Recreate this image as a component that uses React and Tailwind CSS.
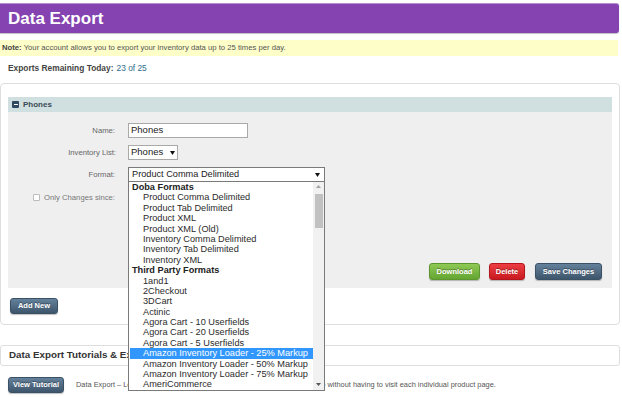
import React from 'react';

const doba = [
    'Product Comma Delimited',
    'Product Tab Delimited',
    'Product XML',
    'Product XML (Old)',
    'Inventory Comma Delimited',
    'Inventory Tab Delimited',
    'Inventory XML',
];

const thirdParty = [
    '1and1',
    '2Checkout',
    '3DCart',
    'Actinic',
    'Agora Cart - 10 Userfields',
    'Agora Cart - 20 Userfields',
    'Agora Cart - 5 Userfields',
    'Amazon Inventory Loader - 25% Markup',
    'Amazon Inventory Loader - 50% Markup',
    'Amazon Inventory Loader - 75% Markup',
    'AmeriCommerce',
];

const Caret = () => (
    <svg width="5" height="4" viewBox="0 0 5 4" className="shrink-0">
        <path d="M0 0 L5 0 L2.5 4 Z" fill="#111" />
    </svg>
);

const Btn = ({ children, className }) => (
    <div
        className={`flex items-center justify-center whitespace-nowrap rounded-[3px] text-[7.5px] font-bold text-white [text-shadow:0_-1px_0_rgba(0,0,0,0.35)] shadow-[0_1px_1px_rgba(0,0,0,0.25)] ${className}`}
    >
        {children}
    </div>
);

const FormatDropdown = () => (
    <div className="absolute left-0 top-full z-10 flex h-[209px] w-[197px] border border-t-0 border-[#7a7a7a] bg-white">
        <div className="flex flex-1 flex-col whitespace-nowrap pl-[1px] text-[9.2px] leading-[10.4px] text-[#2b2b2b]">
            <div className="h-[10.4px] pl-[2px] font-bold text-[#222]">Doba Formats</div>
            {doba.map((item) => (
                <div key={item} className="h-[10.4px] pl-[13px]">{item}</div>
            ))}
            <div className="h-[10.4px] pl-[2px] font-bold text-[#222]">Third Party Formats</div>
            {thirdParty.map((item) => (
                <div
                    key={item}
                    className={`h-[10.4px] pl-[13px] ${item.includes('25%') ? 'bg-[#3297fd] text-white' : ''}`}
                >
                    {item}
                </div>
            ))}
        </div>
        {/* scrollbar */}
        <div className="flex w-[11px] shrink-0 flex-col items-center bg-[#f1f1f1]">
            <svg width="5" height="3" viewBox="0 0 5 3" className="mt-[3px]">
                <path d="M0 3 L5 3 L2.5 0 Z" fill="#a3a3a3" />
            </svg>
            <div className="mt-[6px] h-[34px] w-[8px] bg-[#c1c1c1]"></div>
            <div className="flex-1"></div>
            <svg width="5" height="3" viewBox="0 0 5 3" className="mb-[4px]">
                <path d="M0 0 L5 0 L2.5 3 Z" fill="#555" />
            </svg>
        </div>
    </div>
);

const App = () => {
    return (
        <div className="relative h-[397px] w-[622px] overflow-hidden bg-white font-['Liberation_Sans',Arial,sans-serif] text-[#333]">
            {/* Title bar */}
            <div className="mr-[3px] mt-[3px] flex h-[30px] items-center rounded-r-[3px] border-t border-[#b58fd0] border-b-[#5f2f80] bg-[#8443b0] pl-[8px] shadow-[0_1px_1px_rgba(0,0,0,0.25)]">
                <h1 className="text-[17px] font-bold text-white">Data Export</h1>
            </div>

            {/* Note */}
            <div className="mr-[4px] mt-[7px] flex h-[16px] items-center whitespace-nowrap bg-[#fefec8] pl-[2px] text-[7.7px] text-[#555]">
                <span className="font-bold text-[#444]">Note:</span>
                <span className="ml-[2px]">Your account allows you to export your inventory data up to 25 times per day.</span>
            </div>

            {/* Remaining */}
            <div className="mt-[6px] flex h-[12px] items-center pl-[8px] text-[8.4px]">
                <span className="font-bold text-[#444]">Exports Remaining Today:</span>
                <span className="ml-[3px] text-[#2f6d8c]">23 of 25</span>
            </div>

            {/* Exports panel */}
            <div className="mr-[2px] mt-[9px] h-[242px] rounded-[4px] border border-[#dedede] px-[7px] pt-[13px]">
                <div className="flex h-[15px] items-center gap-[4px] bg-[#d0e0e1] pl-[4px]">
                    <div className="flex h-[7px] w-[7px] items-center justify-center rounded-[1px] bg-[#2f4a5e]">
                        <div className="h-[1px] w-[4px] bg-white"></div>
                    </div>
                    <span className="text-[8px] font-bold text-[#3a4a55]">Phones</span>
                </div>

                <div className="flex h-[176px] flex-col bg-[#efeff0]">
                    <div className="flex flex-col gap-[7px] pt-[11px]">
                        <div className="flex items-center">
                            <div className="w-[108px] pr-[1px] text-right text-[7.7px] text-[#666]">Name:</div>
                            <div className="ml-[12px] flex h-[15px] w-[120px] items-center border border-[#a9a9a9] bg-white pl-[2px] text-[9.5px] text-[#222]">
                                Phones
                            </div>
                        </div>
                        <div className="flex items-center">
                            <div className="w-[108px] text-right text-[7.7px] text-[#666]">Inventory List:</div>
                            <div className="ml-[12px] flex h-[15px] w-[50px] items-center gap-[7px] border border-[#a9a9a9] bg-white pl-[2px] text-[9.5px] text-[#222]">
                                Phones
                                <Caret />
                            </div>
                        </div>
                        <div className="flex items-center">
                            <div className="w-[108px] pr-[1px] text-right text-[7.7px] text-[#666]">Format:</div>
                            <div className="relative ml-[12px]">
                                <div className="flex h-[15px] w-[197px] items-center justify-between whitespace-nowrap border border-[#7a7a7a] bg-white pl-[3px] pr-[4px] text-[9.2px] text-[#222]">
                                    Product Comma Delimited
                                    <Caret />
                                </div>
                                <FormatDropdown />
                            </div>
                        </div>
                        <div className="mt-[3px] flex items-center">
                            <div className="flex w-[107px] items-center justify-end gap-[4px] whitespace-nowrap text-[7.7px] text-[#777]">
                                <div className="h-[7px] w-[7px] shrink-0 rounded-[1px] border border-[#bbb] bg-white"></div>
                                Only Changes since:
                            </div>
                        </div>
                    </div>

                    <div className="mb-[8px] mr-[10px] mt-auto flex justify-end gap-[9px]">
                        <Btn className="h-[17px] w-[51px] border border-[#5d962f] bg-gradient-to-b from-[#90c955] to-[#64a532]">Download</Btn>
                        <Btn className="h-[17px] w-[36px] border border-[#b3161c] bg-gradient-to-b from-[#ec3d42] to-[#c8191f]">Delete</Btn>
                        <Btn className="ml-[1px] h-[17px] w-[67px] border border-[#3a5166] bg-gradient-to-b from-[#64819b] to-[#3e566c]">Save Changes</Btn>
                    </div>
                </div>

                <Btn className="ml-[2px] mt-[10px] h-[16px] w-[48px] border border-[#3a5166] bg-gradient-to-b from-[#64819b] to-[#3e566c]">Add New</Btn>
            </div>

            {/* Tutorials */}
            <div className="mr-[2px] mt-[20px] flex h-[21px] items-center rounded-[3px] border border-[#dedede] pl-[8px] text-[9.8px] font-bold text-[#333]">
                Data Export Tutorials &amp; Examples
            </div>

            <div className="mt-[11px] flex items-center">
                <Btn className="ml-[8px] h-[16px] w-[56px] border border-[#3a5166] bg-gradient-to-b from-[#64819b] to-[#3e566c]">View Tutorial</Btn>
                <p className="ml-[12px] whitespace-nowrap text-[7.4px] text-[#555]">
                    Data Export – Learn how to export your whole inventory list in one easy step without having to visit each individual product page.
                </p>
            </div>
        </div>
    );
};

export default App;
